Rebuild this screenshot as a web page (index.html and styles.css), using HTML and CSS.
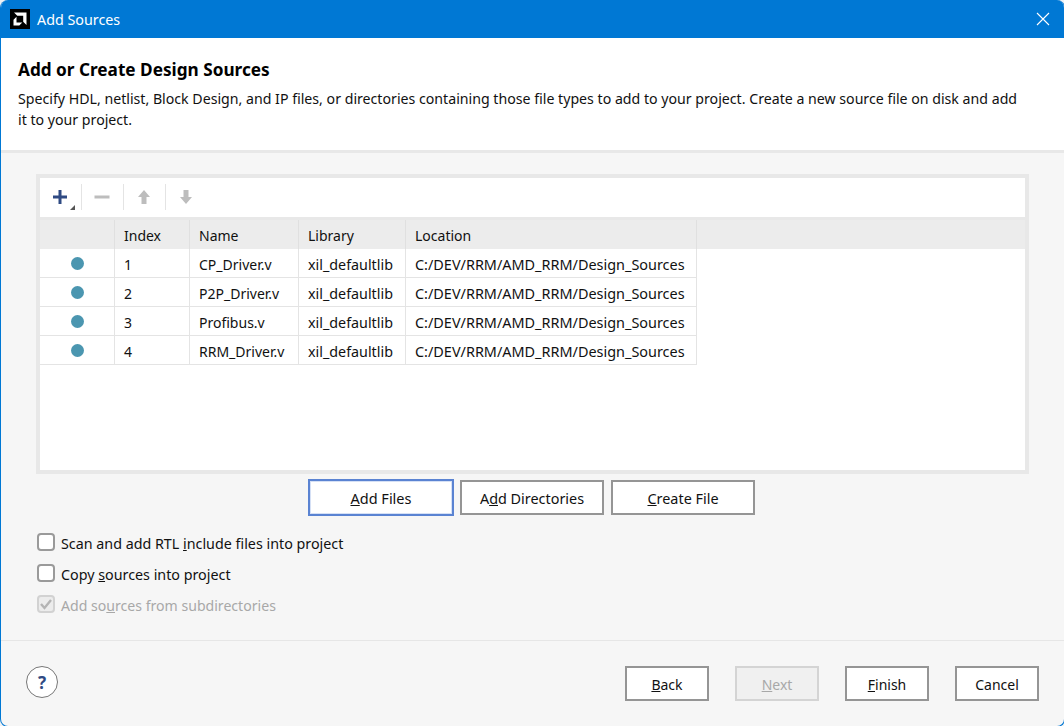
FILE: index.html
```html
<!DOCTYPE html>
<html lang="en">

<head>
	<meta charset="UTF-8">
	<title>Add Sources</title>
	<link rel="stylesheet" href="styles.css">
</head>

<body>
	<div class="dialog">
		<div class="titlebar">
			<svg class="logo" viewBox="0 0 20 20" width="20" height="20">
				<rect width="20" height="20" fill="#000"/>
				<path d="M4 3.500h12.500v12.500l-3.300-3.300v-5.900h-5.900zM3.500 16.500v-5.800l3-3v5.800h5.800l-3 3z" fill="#fff"/>
			</svg>
			<span class="title">Add Sources</span>
			<svg class="close" viewBox="0 0 14 14" width="14" height="14">
				<path d="M1 1l12 12M13 1l-12 12" stroke="#fff" stroke-width="1.100" fill="none"/>
			</svg>
		</div>

		<div class="intro">
			<h1>Add or Create Design Sources</h1>
			<p>Specify HDL, netlist, Block Design, and IP files, or directories containing those file types to add to your project. Create a new source file on disk and add it to your project.</p>
		</div>

		<div class="content">
			<div class="panel">
				<div class="toolbar">
					<button class="tool tool-add">
						<svg viewBox="0 0 16 16" width="16" height="16"><path d="M8 1v14M1 8h14" stroke="#2f4a83" stroke-width="3" fill="none"/></svg>
						<span class="corner"></span>
					</button>
					<span class="tool-sep"></span>
					<button class="tool">
						<svg viewBox="0 0 16 16" width="16" height="16"><path d="M0.500 8h15" stroke="#bdbdbd" stroke-width="3" fill="none"/></svg>
					</button>
					<span class="tool-sep"></span>
					<button class="tool">
						<svg viewBox="0 0 16 16" width="16" height="16"><path d="M8 1l6 7h-3.500v7h-5v-7h-3.500z" fill="#bdbdbd"/></svg>
					</button>
					<span class="tool-sep"></span>
					<button class="tool">
						<svg viewBox="0 0 16 16" width="16" height="16"><path d="M8 15l-6-7h3.500v-7h5v7h3.500z" fill="#bdbdbd"/></svg>
					</button>
				</div>

				<table class="sources">
					<thead>
						<tr>
							<th class="col-status"></th>
							<th class="col-index">Index</th>
							<th class="col-name">Name</th>
							<th class="col-lib">Library</th>
							<th class="col-loc">Location</th>
							<th class="col-rest"></th>
						</tr>
					</thead>
					<tbody>
						<tr>
							<td class="status"><span class="dot"></span></td>
							<td>1</td>
							<td>CP_Driver.v</td>
							<td class="lib">xil_defaultlib</td>
							<td class="loc">C:/DEV/RRM/AMD_RRM/Design_Sources</td>
							<td class="blank"></td>
						</tr>
						<tr>
							<td class="status"><span class="dot"></span></td>
							<td>2</td>
							<td>P2P_Driver.v</td>
							<td class="lib">xil_defaultlib</td>
							<td class="loc">C:/DEV/RRM/AMD_RRM/Design_Sources</td>
							<td class="blank"></td>
						</tr>
						<tr>
							<td class="status"><span class="dot"></span></td>
							<td>3</td>
							<td>Profibus.v</td>
							<td class="lib">xil_defaultlib</td>
							<td class="loc">C:/DEV/RRM/AMD_RRM/Design_Sources</td>
							<td class="blank"></td>
						</tr>
						<tr>
							<td class="status"><span class="dot"></span></td>
							<td>4</td>
							<td>RRM_Driver.v</td>
							<td class="lib">xil_defaultlib</td>
							<td class="loc">C:/DEV/RRM/AMD_RRM/Design_Sources</td>
							<td class="blank"></td>
						</tr>
					</tbody>
				</table>
			</div>

			<div class="panel-actions">
				<button class="btn btn-files focused"><u>A</u>dd Files</button>
				<button class="btn btn-dirs">A<u>d</u>d Directories</button>
				<button class="btn btn-create"><u>C</u>reate File</button>
			</div>

			<div class="options">
				<label class="option">
					<span class="box"></span>
					<span class="option-text">Scan and add RTL <u>i</u>nclude files into project</span>
				</label>
				<label class="option">
					<span class="box"></span>
					<span class="option-text">Copy <u>s</u>ources into project</span>
				</label>
				<label class="option disabled">
					<span class="box">
						<svg viewBox="0 0 16 16" width="16" height="16"><path d="M3 8l3.500 4 6.500-8" stroke="#b4b4b4" stroke-width="2.400" fill="none"/></svg>
					</span>
					<span class="option-text">Add so<u>u</u>rces from subdirectories</span>
				</label>
			</div>
		</div>

		<div class="footer">
			<button class="help">?</button>
			<div class="footer-btns">
				<button class="btn btn-nav"><u>B</u>ack</button>
				<button class="btn btn-nav off"><u>N</u>ext</button>
				<button class="btn btn-nav"><u>F</u>inish</button>
				<button class="btn btn-nav">Cancel</button>
			</div>
		</div>
	</div>
</body>

</html>
```

FILE: styles.css
```css
html,
body {
	margin: 0;
	height: 100%;
	background-color: #eef1f4;
}

body {
	font-family: "Noto Sans", "Open Sans", sans-serif;
	font-size: 14px;
	color: #111;
	overflow: hidden;
}

button {
	font-family: inherit;
	font-size: inherit;
	color: inherit;
}

/* one pixel wider and taller than the window, the right and bottom edges only show at the corners */
.dialog {
	box-sizing: border-box;
	width: 1065px;
	height: 727px;
	display: flex;
	flex-direction: column;
	background-color: #f6f6f6;
	border: 1px solid #0078d4;
	border-top: none;
	border-radius: 8px;
	overflow: hidden;
}

.titlebar {
	height: 38px;
	margin-left: -1px;
	padding-left: 10px;
	padding-right: 14px;
	display: flex;
	align-items: center;
	flex-shrink: 0;
	background-color: #0078d4;
	color: #fff;
}

.logo {
	margin-right: 7px;
}

.title {
	flex: 1;
	font-size: 14.3px;
}

.intro {
	box-sizing: border-box;
	height: 115px;
	padding: 20px 17px 0;
	flex-shrink: 0;
	background-color: #fff;
	border-bottom: 3px solid #e8e8e8;
}

.intro h1 {
	margin: 0 0 6px;
	font-size: 17.2px;
	line-height: 24px;
	font-weight: 700;
	color: #000;
}

.intro p {
	margin: 0;
	font-size: 14.16px;
	line-height: 21px;
	max-width: 1002px;
}

.content {
	flex: 1;
	padding: 21px 35px 0;
}

.panel {
	box-sizing: border-box;
	width: 993px;
	height: 300px;
	border: 4px solid #e8e8e8;
	background-color: #fff;
}

.toolbar {
	box-sizing: border-box;
	height: 42px;
	display: flex;
	align-items: center;
	padding-left: 1px;
	padding-bottom: 1px;
	border-bottom: 3px solid #e8e8e8;
}

.tool {
	position: relative;
	width: 36px;
	height: 26px;
	padding: 0;
	border: none;
	background: none;
	display: flex;
	align-items: center;
	justify-content: center;
}

.tool-add {
	width: 37px;
}

.corner {
	position: absolute;
	right: 3px;
	bottom: 0;
	width: 0;
	height: 0;
	border-left: 5px solid transparent;
	border-bottom: 5px solid #555;
}

.tool-sep {
	width: 1px;
	height: 26px;
	margin: 0 2px 0 3px;
	background-color: #e4e4e4;
}

.sources {
	width: 100%;
	border-collapse: separate;
	border-spacing: 0;
	table-layout: fixed;
}

.sources th {
	height: 29px;
	padding: 2px 0 0 9px;
	box-sizing: border-box;
	background-color: #ececec;
	border-right: 1px solid #e0e0e0;
	font-weight: 400;
	text-align: left;
}

.sources th.col-rest {
	border-right: none;
}

.col-status {
	width: 75px;
}

.col-index {
	width: 75px;
}

.col-name {
	width: 109px;
}

.col-lib {
	width: 107px;
}

.col-loc {
	width: 291px;
}

.sources td {
	height: 29px;
	padding: 2px 0 0 9px;
	box-sizing: border-box;
	border-right: 1px solid #e4e4e4;
	border-bottom: 1px solid #e4e4e4;
	white-space: nowrap;
	overflow: hidden;
}

.sources td.lib {
	font-size: 14.3px;
}

.sources td.loc {
	font-size: 14.43px;
}

.sources td.blank {
	border: none;
}

.sources td.status {
	padding: 2px 0 0;
	text-align: center;
}

.dot {
	display: inline-block;
	width: 13px;
	height: 13px;
	margin-top: 3px;
	border-radius: 50%;
	background-color: #4b96b0;
}

.panel-actions {
	display: flex;
	align-items: center;
	margin-top: 5px;
	margin-left: 272px;
	height: 37px;
}

.btn {
	box-sizing: border-box;
	height: 35px;
	padding: 2px 0 0;
	border: 2px solid #959595;
	background-color: #fff;
}

.btn-files {
	width: 146px;
	height: 37px;
	margin-right: 6px;
	padding-top: 0;
	font-size: 14.5px;
}

.focused {
	border-color: #5a83d2;
	box-shadow: inset 0 0 0 1px #d5e0f5;
}

.btn-dirs {
	width: 144px;
	margin-right: 7px;
	font-size: 14.4px;
}

.btn-create {
	width: 144px;
	font-size: 14.4px;
}

.options {
	margin-top: 15px;
	margin-left: 1px;
	display: flex;
	flex-direction: column;
	gap: 9px;
}

.option {
	display: flex;
	align-items: center;
	height: 22px;
}

.option-text {
	padding-top: 2px;
	font-size: 14.3px;
}

.box {
	box-sizing: border-box;
	width: 18px;
	height: 18px;
	margin-right: 6px;
	border: 2px solid #9a9a9a;
	border-radius: 4px;
	background-color: #fff;
	display: flex;
	align-items: center;
	justify-content: center;
	flex-shrink: 0;
}

.box svg {
	flex-shrink: 0;
}

.option.disabled {
	color: #a8a8a8;
}

.option.disabled .option-text {
	font-size: 14.1px;
}

.option.disabled .box {
	border-color: #d2d2d2;
	background-color: #ececec;
}

.footer {
	box-sizing: border-box;
	height: 86px;
	flex-shrink: 0;
	border-top: 1px solid #e6e6e6;
	display: flex;
	align-items: flex-start;
	justify-content: space-between;
	padding: 25px 24px 0 25px;
	padding-right: 25px;
}

.help {
	box-sizing: border-box;
	width: 32px;
	height: 32px;
	padding: 0;
	border: 1px solid #777;
	border-radius: 50%;
	background-color: #fff;
	color: #2f4a83;
	font-size: 17px;
	font-weight: 700;
	line-height: 1;
}

.footer-btns {
	display: flex;
	gap: 26px;
}

.btn-nav {
	width: 84px;
}

.off {
	border-color: #d4d4d4;
	background-color: #f0f0f0;
	color: #a8a8a8;
}
```
